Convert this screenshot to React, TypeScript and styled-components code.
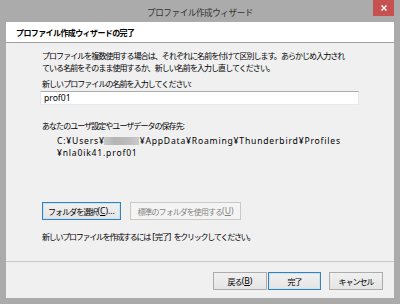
import React from "react";
import styled, { createGlobalStyle } from "styled-components";

const GlobalStyle = createGlobalStyle`
  html, body {
    margin: 0;
    padding: 0;
  }
  body {
    width: 400px;
    height: 304px;
    overflow: hidden;
    background: #ababab;
    font-family: "Noto Sans", "Noto Sans CJK JP", sans-serif;
  }
`;

const Frame = styled.div`
  width: 400px;
  height: 304px;
  box-sizing: border-box;
  background: #ababab;
  padding: 0 6px 6px;
  display: flex;
  flex-direction: column;
`;

const TitleBar = styled.div`
  height: 22px;
  flex: none;
  display: grid;
  grid-template-columns: 1fr auto 1fr;
  align-items: center;
`;

const Title = styled.div`
  grid-column: 2;
  font-family: "Noto Sans CJK JP", sans-serif;
  font-size: 8.6px;
  letter-spacing: -0.45px;
  color: #333;
  padding-top: 2px;
`;

const CloseButton = styled.div`
  grid-column: 3;
  justify-self: end;
  align-self: start;
  width: 21px;
  height: 16px;
  background: #c75050;
  display: flex;
  align-items: center;
  justify-content: center;
`;

const Client = styled.div`
  flex: 1;
  display: flex;
  flex-direction: column;
  background: #f0f0f0;
  color: #000;
  font-size: 8px;
  letter-spacing: -0.95px;
`;

const Header = styled.div`
  height: 21px;
  flex: none;
  box-sizing: border-box;
  background: #fff;
  border-bottom: 1px solid #a0a0a0;
  display: flex;
  align-items: center;
  padding: 1px 0 0 10px;
  font-weight: bold;
  letter-spacing: -0.6px;
`;

const Body = styled.div`
  flex: 1;
  display: flex;
  flex-direction: column;
  align-items: flex-start;
  padding: 7px 35px 0 34px;
`;

const Text = styled.div<{ $gap?: number; $indent?: number; $tight?: boolean }>`
  line-height: 12px;
  white-space: pre;
  margin-top: ${(p) => p.$gap ?? 0}px;
  padding-left: ${(p) => 2 + (p.$indent ?? 0)}px;
  ${(p) => (p.$tight ? "letter-spacing: -1.25px;" : "")}
`;

const Latin = styled.span`
  font-size: 8.6px;
  letter-spacing: 0;
`;

const Path = styled(Latin)`
  letter-spacing: 0.8px;
`;

const Blur = styled.span`
  display: inline-block;
  width: 35px;
  height: 8px;
  margin: 0 1px 0 -1px;
  vertical-align: -1px;
  background: linear-gradient(90deg, #c8c8c8, #b4b4b4 30%, #bdbdbd 70%, #c9c9c9);
  filter: blur(0.6px);
`;

const NameInput = styled.div`
  align-self: stretch;
  height: 14px;
  margin-top: 1px;
  box-sizing: border-box;
  background: #fff;
  border: 1px solid #abadb3;
  border-color: #abadb3 #e3e9ef #e3e9ef #e2e3ea;
  padding-left: 3px;
  display: flex;
  align-items: center;
`;

const ButtonRow = styled.div`
  display: flex;
  gap: 9px;
  margin-top: 43px;
  padding-left: 2px;
`;

const Button = styled.div<{ $width: number; $focus?: boolean; $disabled?: boolean }>`
  width: ${(p) => p.$width}px;
  height: 18px;
  box-sizing: border-box;
  display: flex;
  align-items: center;
  justify-content: center;
  border: 1px solid ${(p) => (p.$focus ? "#3c7fb1" : p.$disabled ? "#c8c8c8" : "#acacac")};
  background: ${(p) =>
    p.$disabled ? "#f4f4f4" : "linear-gradient(#f0f0f0, #e5e5e5)"};
  color: ${(p) => (p.$disabled ? "#838383" : "#000")};
  box-shadow: ${(p) => (p.$focus ? "inset 0 0 0 1px #c4e5f6" : "none")};
  white-space: nowrap;
`;

const Key = styled.u`
  text-underline-offset: 1px;
`;

const Footer = styled.div`
  height: 37px;
  flex: none;
  box-sizing: border-box;
  border-top: 1px solid #c8c8c8;
  display: flex;
  justify-content: flex-end;
  align-items: flex-start;
  padding: 10px 11px 0 0;
`;

const NavGroup = styled.div<{ $gap: number }>`
  display: flex;
  gap: ${(p) => p.$gap}px;
`;

export default function App() {
  return (
    <>
      <GlobalStyle />
      <Frame>
        <TitleBar>
          <Title>プロファイル作成ウィザード</Title>
          <CloseButton>
            <svg width="6" height="6" viewBox="0 0 6 6">
              <path d="M0.5 0.5 L5.5 5.5 M5.5 0.5 L0.5 5.5" stroke="#fff" strokeWidth="1.5" />
            </svg>
          </CloseButton>
        </TitleBar>
        <Client>
          <Header>プロファイル作成ウィザードの完了</Header>
          <Body>
            <Text>
              プロファイルを複数使用する場合は、それぞれに名前を付けて区別します。あらかじめ入力され
              <br />
              ている名前をそのまま使用するか、新しい名前を入力し直してください。
            </Text>
            <Text $gap={4}>新しいプロファイルの名前を入力してください:</Text>
            <NameInput>
              <Latin>prof01</Latin>
            </NameInput>
            <Text $gap={15}>あなたのユーザ設定やユーザデータの保存先:</Text>
            <Text $gap={3} $indent={15}>
              <Path>
                C:¥Users¥<Blur />¥AppData¥Roaming¥Thunderbird¥Profiles
              </Path>
            </Text>
            <Text $indent={15}>
              <Path>¥nla0ik41.prof01</Path>
            </Text>
            <ButtonRow>
              <Button $width={79} $focus>
                フォルダを選択
                <Latin>
                  (<Key>C</Key>)...
                </Latin>
              </Button>
              <Button $width={111} $disabled>
                標準のフォルダを使用する
                <Latin>
                  (<Key>U</Key>)
                </Latin>
              </Button>
            </ButtonRow>
            <Text $gap={11} $tight>
              新しいプロファイルを作成するには<Latin> [</Latin>完了<Latin>] </Latin>をクリックしてください。
            </Text>
          </Body>
          <Footer>
            <NavGroup $gap={8}>
              <NavGroup $gap={1}>
                <Button $width={54}>
                  戻る
                  <Latin>
                    (<Key>B</Key>)
                  </Latin>
                </Button>
                <Button $width={53} $focus>
                  完了
                </Button>
              </NavGroup>
              <Button $width={54}>キャンセル</Button>
            </NavGroup>
          </Footer>
        </Client>
      </Frame>
    </>
  );
}
